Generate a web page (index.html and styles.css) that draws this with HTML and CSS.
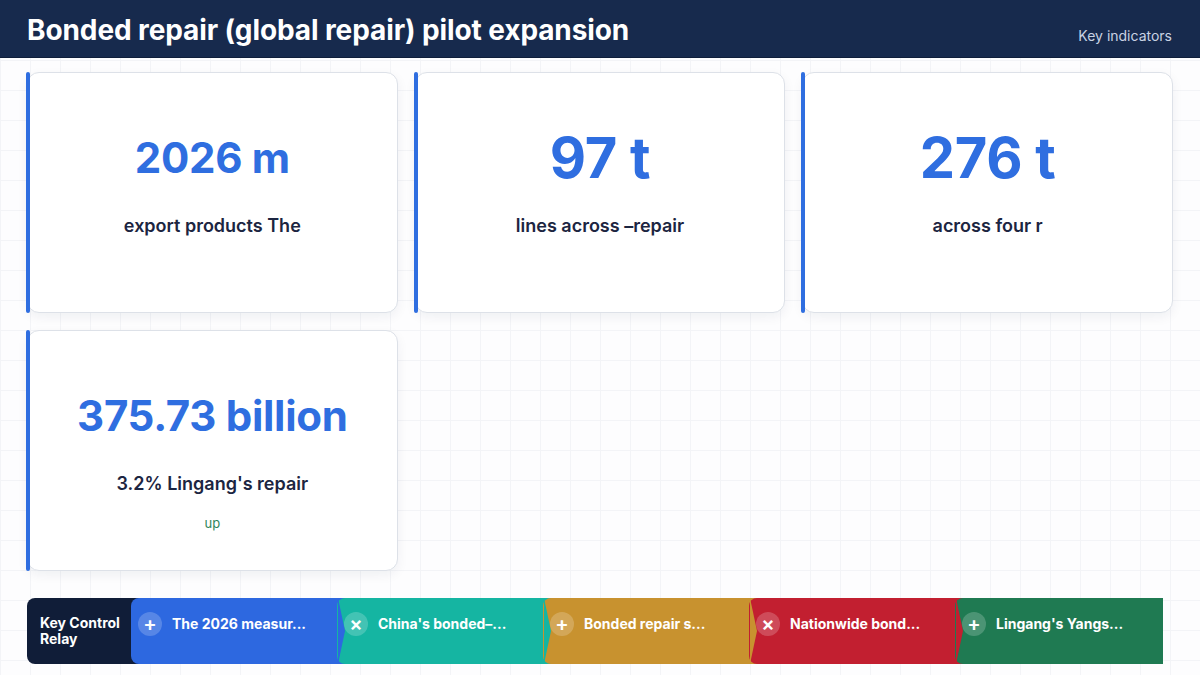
FILE: index.html
```html
<!DOCTYPE html>
<html lang="en">
<head>
<meta charset="utf-8">
<title>Bonded repair pilot expansion</title>
<link rel="stylesheet" href="styles.css">
</head>
<body>
<header class="topbar">
  <h1 class="title">Bonded repair (global repair) pilot expansion</h1>
  <div class="tag">Key indicators</div>
</header>
<main class="main">
  <section class="cards">
    <div class="card">
      <div class="num"><span class="num-text">2026 m</span></div>
      <div class="label">export products The</div>
    </div>
    <div class="card">
      <div class="num"><span class="num-text big">97 t</span></div>
      <div class="label">lines across –repair</div>
    </div>
    <div class="card">
      <div class="num"><span class="num-text big">276 t</span></div>
      <div class="label">across four r</div>
    </div>
    <div class="card">
      <div class="num"><span class="num-text">375.73 billion</span></div>
      <div class="label">3.2% Lingang's repair</div>
      <div class="trend">up</div>
    </div>
  </section>
  <nav class="relay">
    <div class="seg seg-head">Key Control Relay</div>
    <div class="seg seg-blue"><span class="ico">+</span><span class="seg-text">The 2026 measur...</span></div>
    <div class="seg seg-teal"><span class="ico">×</span><span class="seg-text">China's bonded–...</span></div>
    <div class="seg seg-gold"><span class="ico">+</span><span class="seg-text">Bonded repair s...</span></div>
    <div class="seg seg-red"><span class="ico">×</span><span class="seg-text">Nationwide bond...</span></div>
    <div class="seg seg-green"><span class="ico">+</span><span class="seg-text">Lingang's Yangs...</span></div>
  </nav>
</main>
</body>
</html>
```

FILE: styles.css
```css
* { box-sizing: border-box; }
html, body { margin: 0; padding: 0; }
body {
  width: 1200px;
  height: 675px;
  overflow: hidden;
  font-family: Inter, "Noto Sans", sans-serif;
  background-color: #fdfdfe;
  background-image:
    linear-gradient(to right, #f3f4f7 1px, transparent 1px),
    linear-gradient(to bottom, #f3f4f7 1px, transparent 1px);
  background-size: 30px 30px;
}
.topbar {
  height: 58px;
  background: #172a4d;
  border-bottom: 1px solid #0f1e3a;
  display: flex;
  align-items: center;
  justify-content: space-between;
  padding: 0 28px 0 27px;
}
.title {
  margin: 0;
  color: #ffffff;
  font-size: 28px;
  font-weight: 700;
  letter-spacing: -0.1px;
  line-height: 34px;
  padding-top: 2px;
}
.tag {
  color: #c9d2e3;
  font-size: 14px;
  padding-top: 13px;
}
.main {
  padding: 14px 27px 0 27px;
}
.cards {
  display: grid;
  grid-template-columns: repeat(3, 1fr);
  grid-auto-rows: 241px;
  gap: 17px;
}
.card {
  position: relative;
  background: #ffffff;
  border: 1px solid #dde1e8;
  border-radius: 12px;
  box-shadow: 0 4px 12px rgba(20, 35, 70, 0.06);
  padding-top: 53px;
  text-align: center;
}
.card::before {
  content: "";
  position: absolute;
  left: -2px;
  top: -1px;
  bottom: -1px;
  width: 4px;
  border-radius: 2px;
  background: #2f6ee0;
}
.num {
  height: 64px;
  display: flex;
  align-items: center;
  justify-content: center;
}
.num-text {
  color: #2f6ee0;
  font-size: 42px;
  font-weight: 700;
  line-height: 1;
  letter-spacing: -0.3px;
}
.num-text.big {
  font-size: 56px;
}
.label {
  margin-top: 25px;
  color: #1c2541;
  font-size: 18px;
  font-weight: 600;
  line-height: 22px;
}
.trend {
  margin-top: 20px;
  color: #2f855a;
  font-size: 13px;
  line-height: 16px;
}
.relay {
  display: flex;
  margin-top: 27px;
  height: 66px;
}
.seg {
  position: relative;
  height: 66px;
  margin-right: -8px;
  display: flex;
  align-items: flex-start;
  padding: 14px 0 0 7px;
  color: #ffffff;
  font-size: 14px;
  font-weight: 700;
  border-radius: 8px 0 0 8px;
}
.seg::after {
  content: "";
  position: absolute;
  right: 0;
  top: 0;
  width: 0;
  height: 0;
  border-top: 33px solid transparent;
  border-bottom: 33px solid transparent;
  border-left: 7px solid var(--c);
  z-index: 2;
}
.seg-head {
  width: 112px;
  background: #101d38;
  align-items: center;
  padding: 0 0 0 13px;
  line-height: 16px;
}
.seg-head::after { display: none; }
.seg-blue { --c: #2d68e0; background: var(--c); width: 214px; }
.seg-teal { --c: #15b5a2; background: var(--c); width: 214px; }
.seg-gold { --c: #c8922f; background: var(--c); width: 214px; }
.seg-red { --c: #c21f30; background: var(--c); width: 214px; }
.seg-green { --c: #1f7a52; background: var(--c); width: 208px; margin-right: 0; }
.seg-green::after { display: none; }
.ico {
  flex: 0 0 24px;
  width: 24px;
  height: 24px;
  border-radius: 50%;
  background: rgba(255, 255, 255, 0.2);
  display: flex;
  align-items: center;
  justify-content: center;
  font-size: 20px;
  font-weight: 600;
  line-height: 1;
}
.seg-text {
  margin-left: 10px;
  line-height: 24px;
  white-space: nowrap;
}
```
